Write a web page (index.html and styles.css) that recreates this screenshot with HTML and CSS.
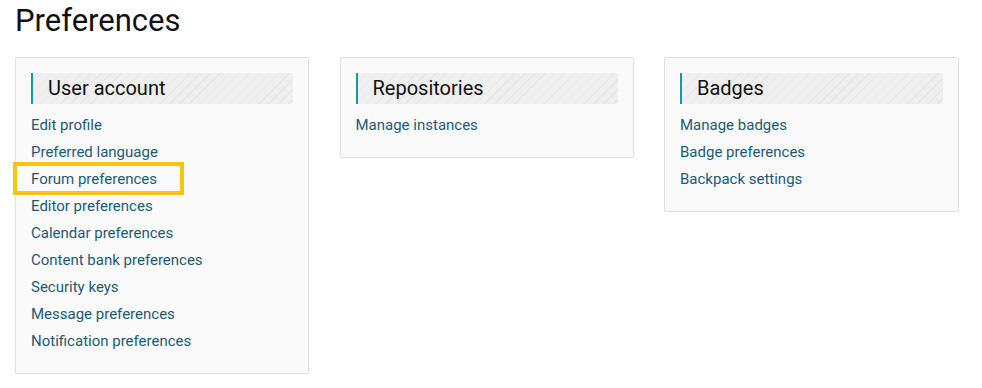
FILE: index.html
```html
<!DOCTYPE html>
<html lang="en">
<head>
<meta charset="utf-8">
<title>Preferences</title>
<link rel="stylesheet" href="styles.css">
</head>
<body>
<main class="page">
  <h1 class="title">Preferences</h1>
  <div class="cards">
    <section class="card">
      <h2 class="card-head">User account</h2>
      <ul class="links">
        <li><a href="#">Edit profile</a></li>
        <li><a href="#">Preferred language</a></li>
        <li><a href="#" class="highlight">Forum preferences</a></li>
        <li><a href="#">Editor preferences</a></li>
        <li><a href="#">Calendar preferences</a></li>
        <li><a href="#">Content bank preferences</a></li>
        <li><a href="#">Security keys</a></li>
        <li><a href="#">Message preferences</a></li>
        <li><a href="#">Notification preferences</a></li>
      </ul>
    </section>
    <section class="card">
      <h2 class="card-head">Repositories</h2>
      <ul class="links">
        <li><a href="#">Manage instances</a></li>
      </ul>
    </section>
    <section class="card">
      <h2 class="card-head">Badges</h2>
      <ul class="links">
        <li><a href="#">Manage badges</a></li>
        <li><a href="#">Badge preferences</a></li>
        <li><a href="#">Backpack settings</a></li>
      </ul>
    </section>
  </div>
</main>
</body>
</html>
```
FILE: styles.css
```css
html, body {
  margin: 0;
  padding: 0;
  background: #ffffff;
}
body {
  font-family: Roboto, "Liberation Sans", Arial, sans-serif;
  color: #1d2125;
}
.page {
  padding: 3px 15px 0 15px;
}
.title {
  margin: 0 0 18px 0;
  font-size: 31px;
  line-height: 36px;
  font-weight: 400;
  color: #111111;
}
.cards {
  display: grid;
  grid-template-columns: 294px 294px 295px;
  column-gap: 30.5px;
  align-items: start;
}
.card {
  background: #fafafa;
  border: 1px solid #dfdfdf;
  border-radius: 2px;
  padding: 15px 15px 18px 15px;
}
.card-head {
  margin: 0 0 8px 0;
  height: 31px;
  line-height: 31px;
  font-size: 20px;
  font-weight: 400;
  color: #111111;
  padding-left: 15px;
  border-left: 2px solid #14999d;
  border-radius: 0 3px 3px 0;
  background-color: #efefef;
  background-image: repeating-linear-gradient(135deg, #efefef 0px, #efefef 6px, #e8e8e8 6px, #e8e8e8 7px);
}
.links {
  list-style: none;
  margin: 0;
  padding: 0;
}
.links li {
  height: 27px;
  line-height: 27px;
  font-size: 15px;
}
.links a {
  color: #1c5a73;
  text-decoration: none;
}
.highlight {
  position: relative;
  display: inline-block;
}
.highlight::after {
  content: "";
  position: absolute;
  top: -4px;
  left: -18px;
  width: 171px;
  height: 33px;
  box-sizing: border-box;
  border: 4px solid #f8c412;
}
```
